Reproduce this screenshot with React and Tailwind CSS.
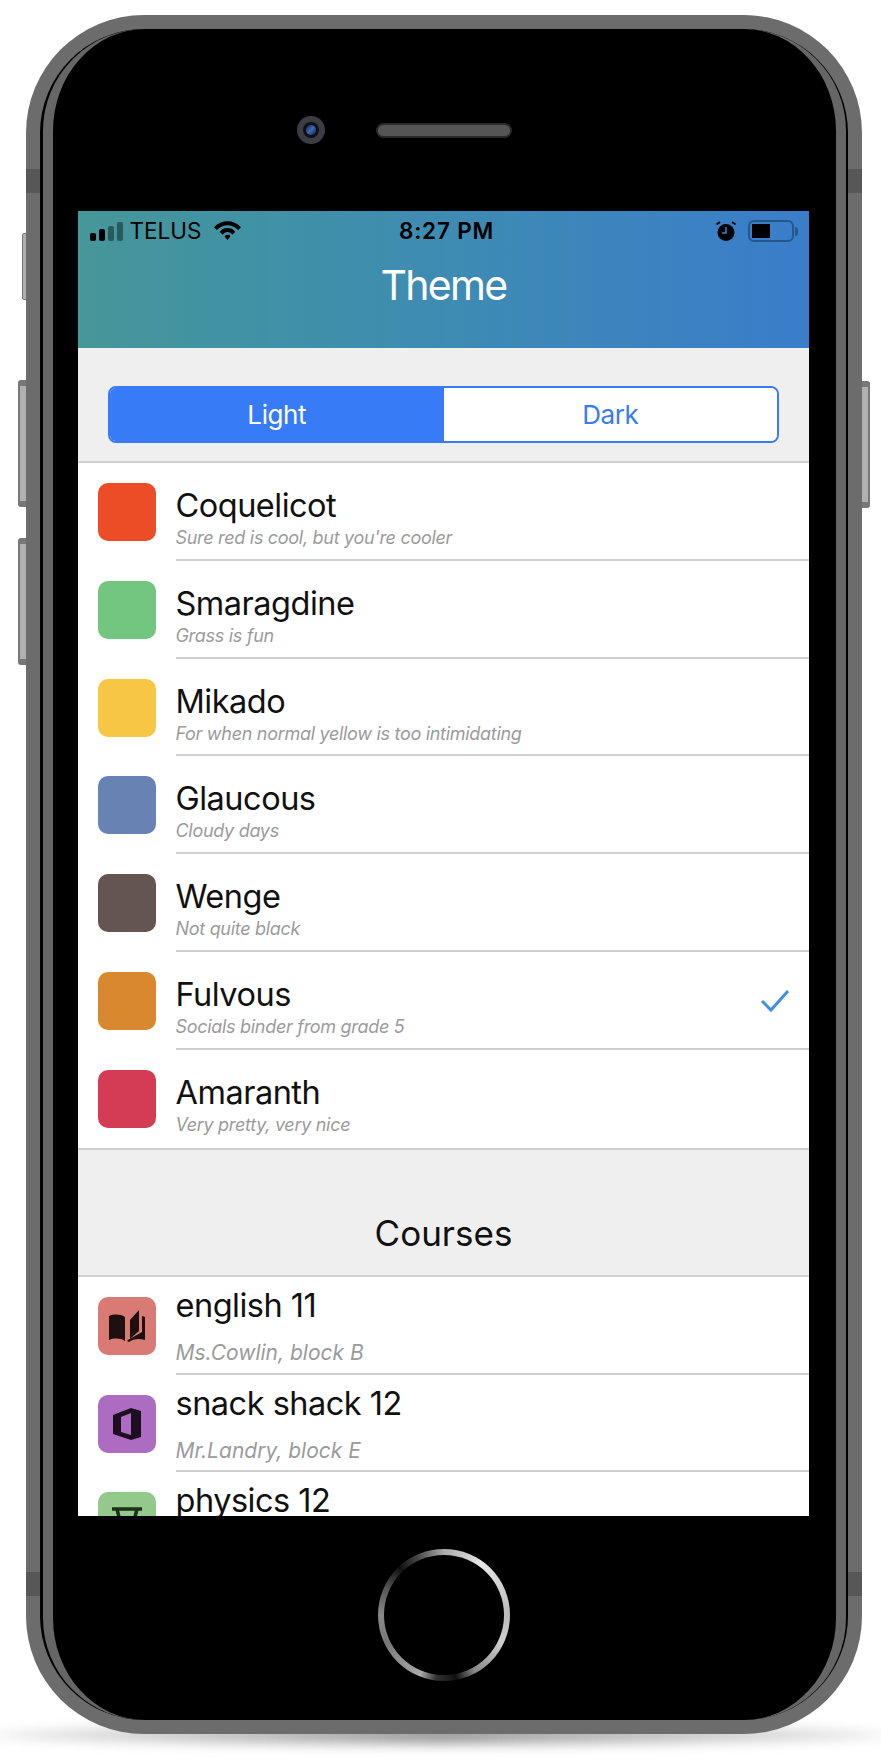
import React from "react";

const themes = [
  { name: "Coquelicot", note: "Sure red is cool, but you're cooler", color: "bg-[#ec4d26]" },
  { name: "Smaragdine", note: "Grass is fun", color: "bg-[#72c67f]" },
  { name: "Mikado", note: "For when normal yellow is too intimidating", color: "bg-[#f6c644]" },
  { name: "Glaucous", note: "Cloudy days", color: "bg-[#6882b3]" },
  { name: "Wenge", note: "Not quite black", color: "bg-[#645452]" },
  { name: "Fulvous", note: "Socials binder from grade 5", color: "bg-[#d98830]", checked: true },
  { name: "Amaranth", note: "Very pretty, very nice", color: "bg-[#d33c54]" },
];

function BookIcon() {
  return (
    <svg width="36" height="32" viewBox="0 0 36 32" fill="#1e100e">
      <path d="M0 6c5-2 11-2 16 1v24c-5-3-11-3-16-1z" />
      <path d="M21 10l9-10v21l-9 8z" />
      <path d="M33 6l3 1v23c-6-2-12-1-16 2l-2-1 1-1 14-8z" />
    </svg>
  );
}

function OfficeIcon() {
  return (
    <svg width="28" height="32" viewBox="0 0 28 32" fill="#1c1020">
      <path fillRule="evenodd" d="M18 0l10 3v26l-10 3-18-6V7zM18 5L8 9v15l10 3z" />
    </svg>
  );
}

function HourglassIcon() {
  return (
    <svg width="30" height="28" viewBox="0 0 30 28" fill="none" stroke="#1b3018" strokeWidth="3.500">
      <path d="M0 2h30M5 2l3 12h14l3-12" />
    </svg>
  );
}

function StatusBar() {
  return (
    <div className="flex h-[40px] items-center pr-[11px] pl-[11.500px] text-black">
      <div className="flex w-[292px] items-center">
        <div className="flex items-end gap-[3px]">
          <span className="h-[8px] w-[6px] rounded-[2px] bg-black" />
          <span className="h-[12px] w-[6px] rounded-[2px] bg-black" />
          <span className="h-[15px] w-[6px] rounded-[2px] bg-black/40" />
          <span className="h-[19px] w-[6px] rounded-[2px] bg-black/40" />
        </div>
        <span className="ml-[7px] text-[22.500px] leading-none">TELUS</span>
        <svg className="ml-[13px]" width="27" height="20" viewBox="0 0 28 20" fill="black">
          <path d="M14 0C9 0 4 2 0 6l3 3c3-3 7-5 11-5s8 2 11 5l3-3c-4-4-9-6-14-6z" />
          <path d="M14 7c-3 0-6 1-8 4l3 3c1-2 3-3 5-3s4 1 5 3l3-3c-2-3-5-4-8-4z" />
          <path d="M14 14c-1.500 0-2.500.5-3 1.500l3 4 3-4c-.5-1-1.500-1.500-3-1.500z" />
        </svg>
      </div>
      <span className="w-[130px] text-center text-[22.500px] leading-none font-semibold tracking-[0.8px]">8:27 PM</span>
      <div className="flex flex-1 items-center justify-end gap-[12px]">
        <svg width="20" height="20" viewBox="0 0 20 20">
          <circle cx="10" cy="11.500" r="8.500" fill="black" />
          <path d="M10 6v6H6" fill="none" stroke="#3d84c0" strokeWidth="1.500" />
          <path d="M0.500 3.500 4 1M19.500 3.500 16 1" stroke="black" strokeWidth="2" />
        </svg>
        <div className="flex items-center gap-[1px]">
          <div className="flex h-[22px] w-[46px] items-center rounded-[6px] border-[2px] border-[#24578c] p-[2px]">
            <div className="h-full w-[18px] bg-black" />
          </div>
          <div className="h-[9px] w-[3px] rounded-r-full bg-[#24578c]" />
        </div>
      </div>
    </div>
  );
}

function ThemeRow({ item, last }) {
  return (
    <div className={`flex pl-[20px] ${last ? "h-[98px]" : "h-[97.800px]"}`}>
      <div className={`mt-[20px] h-[58px] w-[58px] shrink-0 rounded-[10px] ${item.color}`} />
      <div className={`ml-[19.500px] flex min-w-0 flex-1 items-center border-b-[2px] ${last ? "border-transparent" : "border-[#cfcfcf]"}`}>
        <div className="flex-1 self-start pt-[23px]">
          <div className="text-[32.500px] leading-[40px] tracking-[-0.5px] text-[#111]">{item.name}</div>
          <div className="text-[18px] leading-[24px] tracking-[-0.3px] text-[#9b9b9b] italic">{item.note}</div>
        </div>
        {item.checked && (
          <svg className="mt-[2px] mr-[19px]" width="30" height="24" viewBox="0 0 30 24" fill="none" stroke="#3d8fe8" strokeWidth="3">
            <path d="M2 12l9 9L28 2" />
          </svg>
        )}
      </div>
    </div>
  );
}

function CourseRow({ name, note, color, icon, last }) {
  return (
    <div className="flex h-[97.800px] pl-[20px]">
      <div className={`mt-[20px] flex h-[58px] w-[58px] shrink-0 items-center justify-center rounded-[10px] ${color}`}>{icon}</div>
      <div className={`ml-[19.500px] flex-1 border-b-[2px] ${last ? "border-transparent" : "border-[#cfcfcf]"}`}>
        <div className="mt-[10px] text-[32.500px] leading-[38px] tracking-[-0.5px] text-[#111]">{name}</div>
        <div className="mt-[15.500px] text-[21px] leading-[26px] text-[#9b9b9b] italic">{note}</div>
      </div>
    </div>
  );
}

export default function App() {
  return (
    <div className="relative h-[1763px] w-[881px] overflow-hidden bg-white pt-[15px] pl-[26px] font-['Inter',sans-serif]">
      {/* shadow under the phone */}
      <div className="absolute top-[1726px] left-[-10px] h-[18px] w-[901px] rounded-[50%] bg-gradient-to-r from-[#e8e8e8] via-[#9a9a9a] to-[#e8e8e8] blur-[6px]" />

      {/* side buttons */}
      <div className="absolute top-[233px] left-[22px] h-[67px] w-[5px] rounded-l-[2px] border-[1px] border-[#777] bg-[#b0b0b0]" />
      <div className="absolute top-[380px] left-[18px] h-[127px] w-[9px] rounded-l-[3px] border-y-[6px] border-l-[2px] border-[#777] bg-[#b0b0b0]" />
      <div className="absolute top-[538px] left-[18px] h-[127px] w-[9px] rounded-l-[3px] border-y-[6px] border-l-[2px] border-[#777] bg-[#b0b0b0]" />
      <div className="absolute top-[381px] left-[861px] h-[127px] w-[9px] rounded-r-[3px] border-y-[6px] border-r-[2px] border-[#777] bg-[#b0b0b0]" />

      {/* phone body */}
      <div className="relative h-[1719px] w-[836px] rounded-[118px] bg-[#6c6c6c] p-[14px]">
        {/* antenna bands */}
        <div className="absolute top-[154px] left-0 h-[24px] w-[14px] bg-[#575757]" />
        <div className="absolute top-[154px] right-0 h-[24px] w-[14px] bg-[#575757]" />
        <div className="absolute top-[1557px] left-0 h-[24px] w-[14px] bg-[#575757]" />
        <div className="absolute top-[1557px] right-0 h-[24px] w-[14px] bg-[#575757]" />

        <div className="h-[1691px] w-[808px] rounded-[104px] bg-black px-[2.500px]">
          <div className="flex h-full flex-col items-center rounded-[102px] border-x-[10px] border-[#666] bg-black">
            {/* camera + speaker */}
            <div className="flex h-[182px] w-full items-center justify-center pt-[20px]">
              <div className="relative h-[15px] w-[136px] rounded-full border-[2px] border-[#2a2a2a] bg-[#555]">
                <div className="absolute top-[-8.500px] left-[-81px] flex h-[28px] w-[28px] items-center justify-center rounded-full bg-[#3a3d42]">
                  <div className="flex h-[16px] w-[16px] items-center justify-center rounded-full bg-[#0c0f16]">
                    <div className="h-[10px] w-[10px] rounded-full bg-gradient-to-br from-[#16264f] via-[#3c69b4] to-[#16264f]" />
                  </div>
                </div>
              </div>
            </div>

            {/* screen */}
            <div className="mr-[1px] h-[1305px] w-[731px] shrink-0 overflow-hidden bg-white">
              <div className="h-[137px] bg-gradient-to-r from-[#459799] to-[#3a7dca]">
                <StatusBar />
                <div className="pt-[9px] text-center text-[41px] leading-[50px] tracking-[-1.700px] text-white">Theme</div>
              </div>

              <div className="flex h-[115px] items-start border-b-[2px] border-[#d0d0d0] bg-[#efefef] px-[30px] pt-[38px]">
                <div className="flex h-[57px] w-[671px] overflow-hidden rounded-[8px] border-[2px] border-[#377bf6] text-[26px] tracking-[-0.4px]">
                  <div className="flex flex-1 items-center justify-center bg-[#377bf6] text-white">Light</div>
                  <div className="flex flex-1 items-center justify-center bg-white text-[#377bf6]">Dark</div>
                </div>
              </div>

              <div className="bg-white">
                {themes.map((item, i) => (
                  <ThemeRow key={item.name} item={item} last={i === themes.length - 1} />
                ))}
              </div>

              <div className="flex h-[129px] items-end justify-center border-y-[2px] border-[#d0d0d0] bg-[#efefef] pb-[20px] text-[35px] leading-[44px] text-[#111]">
                Courses
              </div>

              <div className="bg-white">
                <CourseRow name="english 11" note="Ms.Cowlin, block B" color="bg-[#d97a75]" icon={<BookIcon />} />
                <CourseRow name="snack shack 12" note="Mr.Landry, block E" color="bg-[#ae6bc2]" icon={<OfficeIcon />} />
                <CourseRow name="physics 12" note="" color="bg-[#93c98b]" icon={<HourglassIcon />} last />
              </div>
            </div>

            {/* home button */}
            <div className="mt-[33px] rounded-full bg-[conic-gradient(#aaa,#e8e8e8_10%,#bbb_25%,#d0d0d0_32%,#888_42%,#111_47%,#333_52%,#aaa_56%,#777_68%,#888_75%,#555_82%,#111_88%,#444_93%,#aaa)] p-[6px]">
              <div className="h-[120px] w-[120px] rounded-full bg-black" />
            </div>
          </div>
        </div>
      </div>
    </div>
  );
}
